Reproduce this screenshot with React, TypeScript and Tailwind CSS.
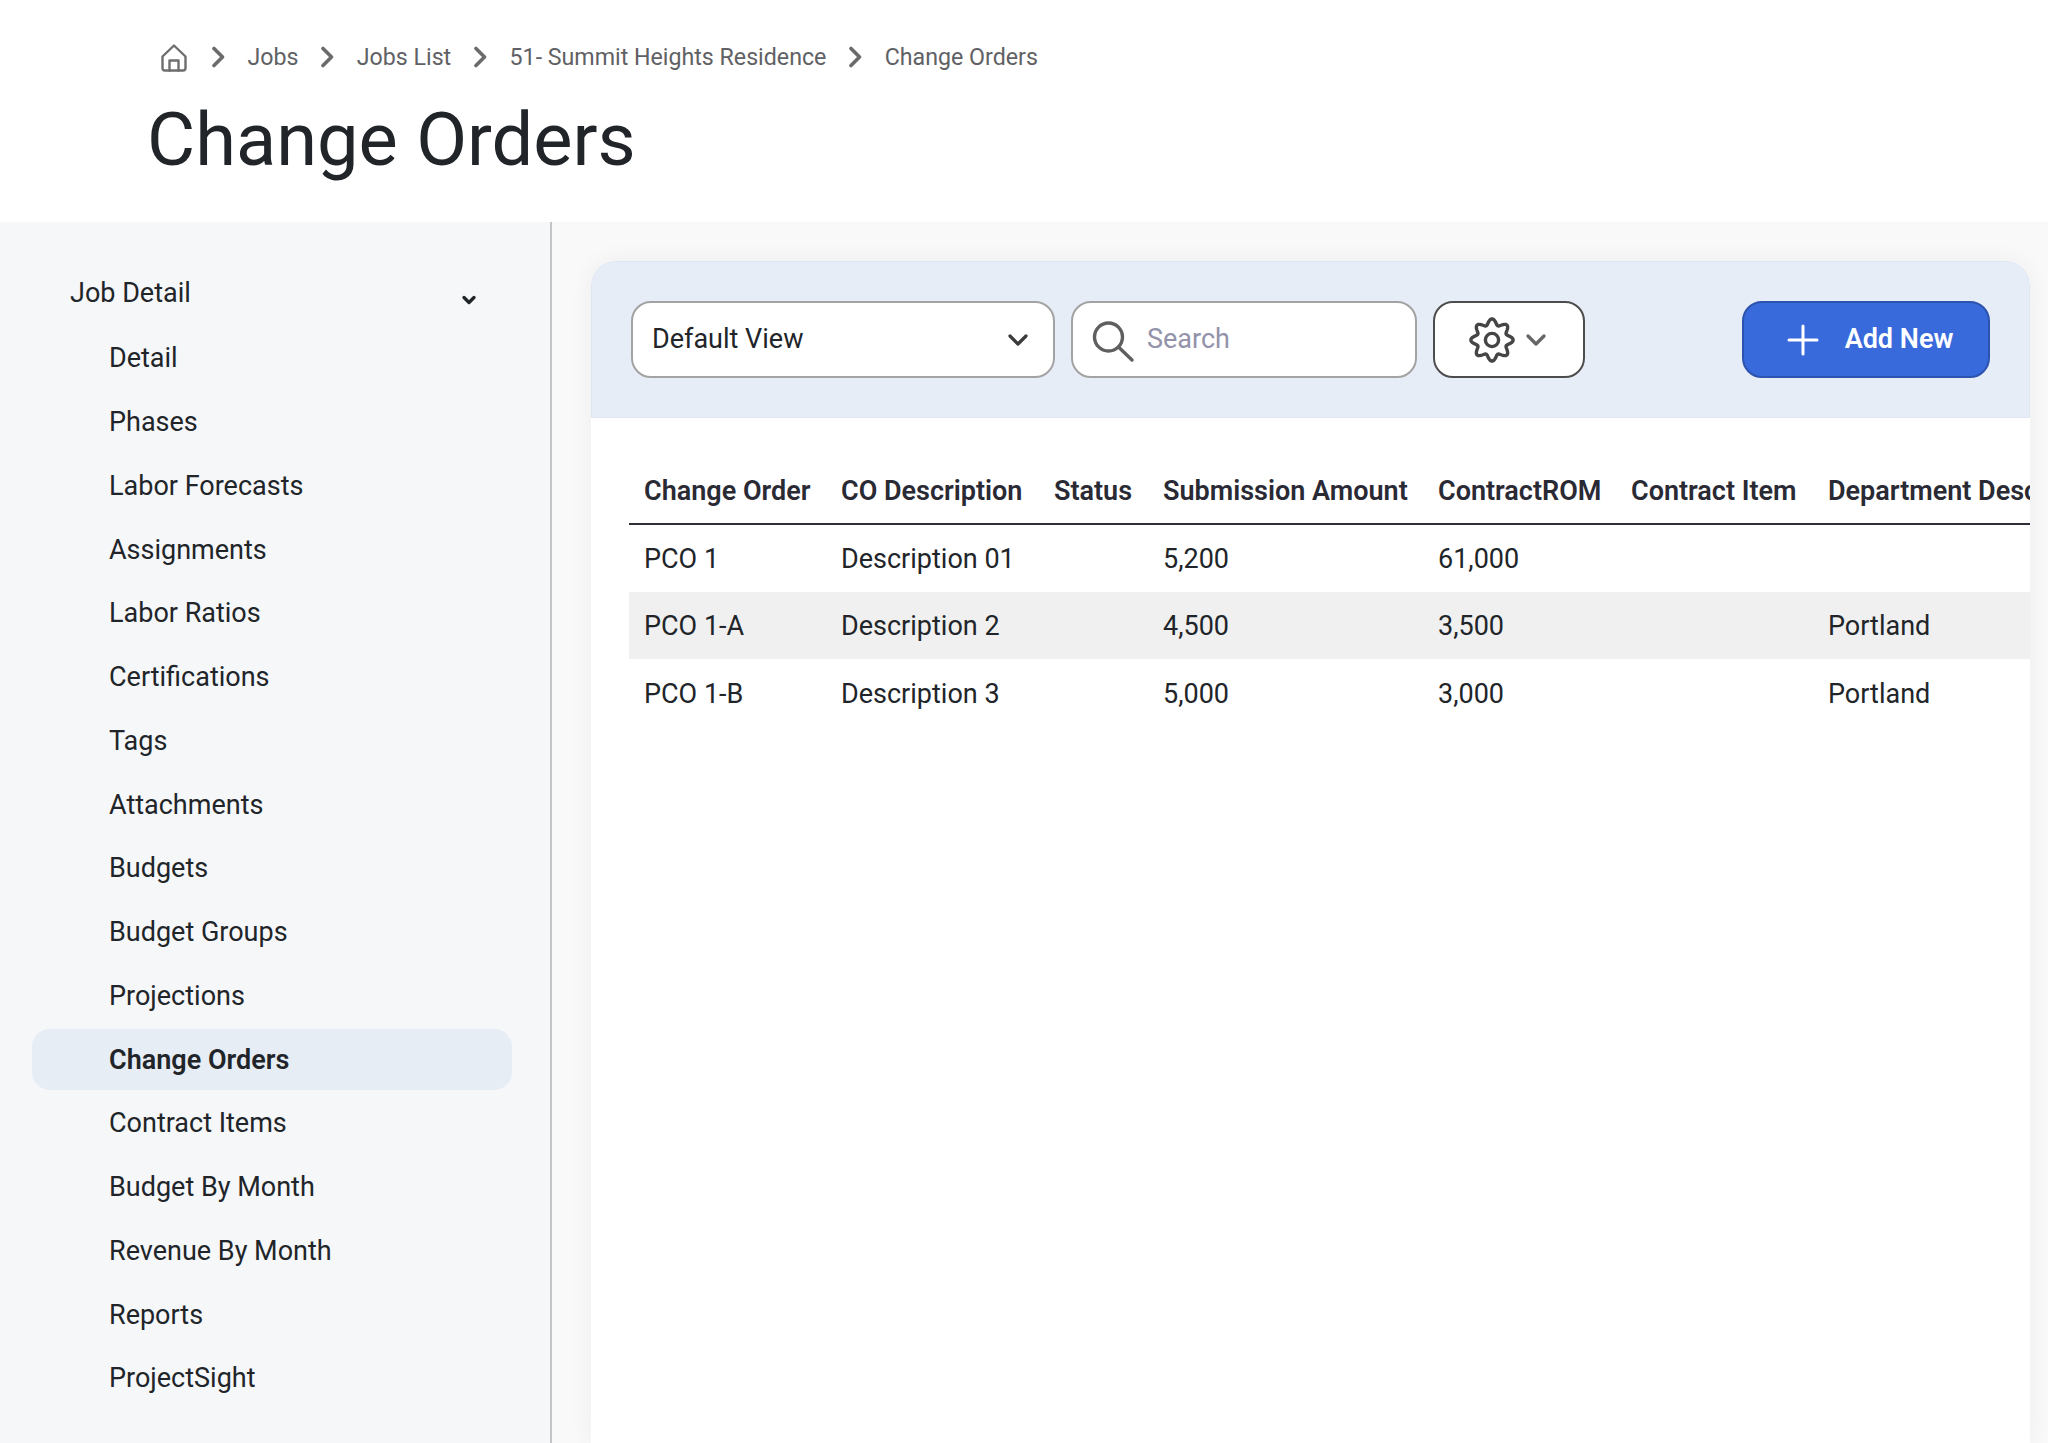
import { ChevronDown, Plus } from "lucide-react";

const navItems = ["Detail","Phases","Labor Forecasts","Assignments","Labor Ratios","Certifications","Tags","Attachments","Budgets","Budget Groups","Projections","Change Orders","Contract Items","Budget By Month","Revenue By Month","Reports","ProjectSight"];
const crumbs = ["Jobs","Jobs List","51- Summit Heights Residence","Change Orders"];
const columns = [
  { label: "Change Order", w: "w-[197px]" },
  { label: "CO Description", w: "w-[213px]" },
  { label: "Status", w: "w-[109px]" },
  { label: "Submission Amount", w: "w-[275px]" },
  { label: "ContractROM", w: "w-[193px]" },
  { label: "Contract Item", w: "w-[197px]" },
  { label: "Department Description", w: "w-[320px]" },
];
const rows = [
  ["PCO 1","Description 01","","5,200","61,000","",""],
  ["PCO 1-A","Description 2","","4,500","3,500","","Portland"],
  ["PCO 1-B","Description 3","","5,000","3,000","","Portland"],
];

function gearPath() {
  const pts: string[] = [];
  for (let i = 0; i < 240; i++) {
    const t = (i / 240) * Math.PI * 2;
    const r = 18.2 + 2.9 * Math.cos(8 * t);
    pts.push(`${(24 + r * Math.sin(t)).toFixed(2)} ${(24 - r * Math.cos(t)).toFixed(2)}`);
  }
  return `M${pts.join("L")}Z`;
}

function Crumb() {
  return (
    <svg width="13" height="22" viewBox="0 0 13 22" fill="none" stroke="#6b6b6b" strokeWidth="3.6" strokeLinecap="round" strokeLinejoin="round">
      <polyline points="2,2.5 10.5,11 2,19.5" />
    </svg>
  );
}

export default function App() {
  return (
    <div className="h-[1443px] overflow-hidden bg-white font-['Roboto',sans-serif] text-[#212529]">
      <header className="h-[222px] pl-[147px]">
        <nav className="flex h-[113px] items-center gap-[22.7px] pl-[14px] pt-[2px] text-[23.2px] text-[#5f6164]">
          <svg width="26" height="28" viewBox="0 0 26 28" fill="none" stroke="#6e6e6e" strokeWidth="2.4" strokeLinejoin="round" strokeLinecap="round" className="mr-[2px]">
            <path d="M1.5 12.5 L13 1.5 L24.5 12.5 V24 a2.5 2.5 0 0 1 -2.5 2.5 H4 a2.5 2.5 0 0 1 -2.5 -2.5 Z" />
            <path d="M8.5 26.5 V16.5 H17.5 V26.5" />
          </svg>
          {crumbs.map((c) => (
            <div key={c} className="flex items-center gap-[22.7px]">
              <Crumb />
              <span>{c}</span>
            </div>
          ))}
        </nav>
        <h1 className="-mt-[15px] text-[74px] font-normal leading-[84px] text-[#212529]">Change Orders</h1>
      </header>
      <div className="flex h-[1221px] bg-[#f6f7f9]">
        <aside className="w-[552px] shrink-0 border-r-2 border-[#c4c5c7] pl-[32px] pr-[38px] pt-[48px]">
          <div className="relative flex h-[46px] items-center pl-[38px] text-[27px]">
            Job Detail
            <ChevronDown size={20} strokeWidth={4} className="absolute right-[33px] top-[20px] text-[#212529]" />
          </div>
          <ul className="mt-[12px] flex flex-col gap-[2.75px]">
            {navItems.map((n) => (
              <li key={n} className={`flex h-[61px] items-center rounded-[18px] pl-[77px] text-[27px] ${n === "Change Orders" ? "bg-[#e6edf5] font-semibold" : ""}`}>{n}</li>
            ))}
          </ul>
        </aside>
        <main className="min-w-0 flex-1 bg-[#f9f9fa] pl-[39px] pr-[18px] pt-[39px]">
          <div className="h-full overflow-hidden rounded-t-[24px] bg-white shadow-[0_0_24px_rgba(0,0,0,0.05)]">
            <div className="flex h-[157px] items-center gap-[16px] rounded-t-[24px] border border-[#dfe6f3] bg-[#e6edf7] pl-[39px] pr-[39px]">
              <div className="flex h-[77px] w-[424px] items-center justify-between rounded-[20px] border-2 border-[#a3a3a3] bg-white pl-[19px] pr-[19px] text-[27px]">
                Default View
                <ChevronDown size={32} strokeWidth={2.4} className="text-[#3a3a3a]" />
              </div>
              <div className="flex h-[77px] w-[346px] items-center gap-[12px] rounded-[20px] border-2 border-[#a3a3a3] bg-white pl-[18px] text-[27px] text-[#9292aa]">
                <svg width="44" height="48" viewBox="0 0 44 48" fill="none" stroke="#5f5f5f" strokeWidth="3.4" strokeLinecap="round">
                  <circle cx="17.5" cy="21" r="14" />
                  <line x1="27.5" y1="31" x2="41" y2="44" />
                </svg>
                Search
              </div>
              <div className="flex h-[77px] w-[152px] items-center gap-[4px] rounded-[20px] border-2 border-[#4d4d4d] bg-white pl-[33px]">
                <svg width="48" height="48" viewBox="0 0 48 48" fill="none" stroke="#454545" strokeWidth="3.4">
                  <path d={gearPath()} strokeLinejoin="round" />
                  <circle cx="24" cy="24" r="6.6" />
                </svg>
                <ChevronDown size={32} strokeWidth={2.5} className="text-[#666666]" />
              </div>
              <button className="ml-auto flex h-[77px] w-[248px] items-center justify-center gap-[18px] rounded-[20px] border-2 border-[#2c53ad] bg-[#386adb] text-[27px] font-semibold text-white">
                <Plus size={48} strokeWidth={1.5} />
                Add New
              </button>
            </div>
            <div className="pl-[38px] pt-[40px]">
              <table className="w-[1504px] table-fixed border-collapse text-left text-[27px]">
                <thead>
                  <tr className="h-[66px] border-b-2 border-[#2f2f35] text-[#2a2a35]">
                    {columns.map((c) => (
                      <th key={c.label} className={`${c.w} overflow-hidden whitespace-nowrap pl-[15px] pr-[16px] pt-[2px] font-semibold`}>{c.label}</th>
                    ))}
                  </tr>
                </thead>
                <tbody>
                  {rows.map((r, i) => (
                    <tr key={r[0]} className={`h-[67.5px] ${i === 1 ? "bg-[#f0f0f0]" : ""}`}>
                      {r.map((cell, j) => (
                        <td key={j} className="whitespace-nowrap pl-[15px] pr-[16px] pt-[2px]">{cell}</td>
                      ))}
                    </tr>
                  ))}
                </tbody>
              </table>
            </div>
          </div>
        </main>
      </div>
    </div>
  );
}
